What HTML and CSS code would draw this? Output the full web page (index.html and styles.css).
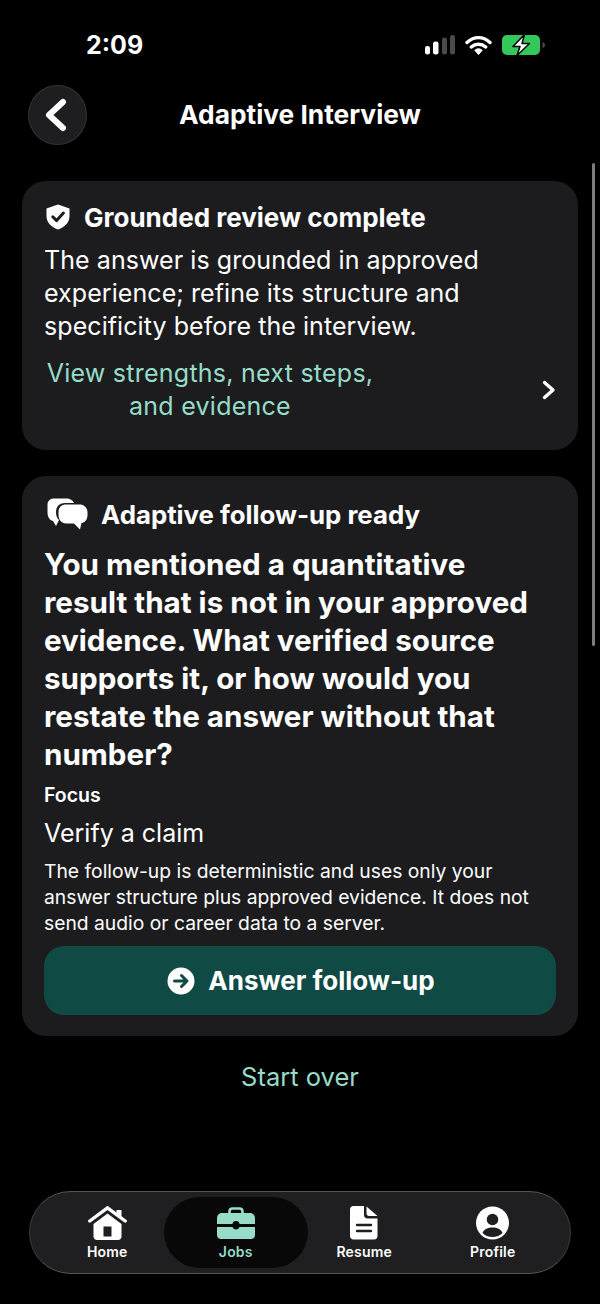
FILE: index.html
```html
<!DOCTYPE html>
<html>
<head>
<meta name="viewport" content="width=device-width, initial-scale=1">
<link rel="stylesheet" href="styles.css">
</head>
<body>
<div class="page">
  <div class="status">
    <span class="time">2:09</span>
    <div class="status-icons">
      <svg width="30" height="20" viewBox="0 0 30 20">
        <rect x="0" y="11" width="5" height="8.500" rx="2.300" fill="#fff"/>
        <rect x="8" y="6.500" width="5.500" height="13" rx="2.300" fill="#fff"/>
        <rect x="17" y="2.500" width="5" height="17" rx="2.300" fill="#4a4a4a"/>
        <rect x="25" y="0" width="5" height="19.500" rx="2.300" fill="#4a4a4a"/>
      </svg>
      <svg width="27" height="21" viewBox="0 0 27 21">
        <path d="M2 7.500C9 1 18 1 25 7.500M6.300 12C10.500 8.300 16.500 8.300 20.700 12" fill="none" stroke="#fff" stroke-width="3.400" stroke-linecap="round"/>
        <path d="M9.800 15.300C12 13.300 15 13.300 17.200 15.300L13.500 19.500Z" fill="#fff" stroke="#fff" stroke-linejoin="round"/>
      </svg>
      <svg width="43" height="22" viewBox="0 0 43 22">
        <rect x="0" y="1" width="38" height="20" rx="5" fill="#34c759"/>
        <path d="M40.500 8c1.500.5 2.500 1.500 2.500 3s-1 2.500-2.500 3z" fill="#4a4a4a"/>
        <path d="M22.500 .5L11 12.500h7L15 21.500 27.500 9.500h-7.500z" fill="#fff" stroke="#000" stroke-width="1.500" stroke-linejoin="round"/>
      </svg>
    </div>
  </div>

  <div class="topbar">
    <button class="back">
      <svg width="26" height="34" viewBox="0 0 26 34"><path d="M20 4L6 17l14 13" fill="none" stroke="#fff" stroke-width="6" stroke-linecap="round" stroke-linejoin="round"/></svg>
    </button>
    <h1 class="title">Adaptive Interview</h1>
  </div>

  <div class="scrollbar"></div>

  <div class="content">
    <div class="card card-review">
      <div class="card-head">
        <svg width="24" height="26" viewBox="0 0 24 26">
          <path d="M12 0.500L23.500 4.500V12C23.500 18.500 19 23 12 25.500 5 23 .5 18.500 .5 12V4.500Z" fill="#fff"/>
          <path d="M6.800 12.800l3.800 3.800 6.800-7.600" fill="none" stroke="#1c1c1e" stroke-width="3" stroke-linecap="round" stroke-linejoin="round"/>
        </svg>
        <h2 class="head-text">Grounded review complete</h2>
      </div>
      <p class="summary">The answer is grounded in approved experience; refine its structure and specificity before the interview.</p>
      <div class="more">
        <span class="more-text">View strengths, next steps, and evidence</span>
        <svg width="14" height="20" viewBox="0 0 14 20"><path d="M2.500 2.500L11 10l-8.500 7.500" fill="none" stroke="#fff" stroke-width="3.400" stroke-linecap="round" stroke-linejoin="round"/></svg>
      </div>
    </div>

    <div class="card card-follow">
      <div class="card-head follow-head">
        <svg width="41" height="32" viewBox="0 0 41 32">
          <path d="M7 0.500H19C23 0.500 26 2.500 27 5H18C12 5 9 9 9 14 9 18 10 20 12 22L9 28 6 23C2.500 22 0.500 19 0.500 14V7C0.500 3 3 .5 7 .5Z" fill="#fff"/>
          <path d="M19 6.500H32C37 6.500 40.500 9.500 40.500 14.500V17C40.500 21.500 38 24.500 34.500 25L33 31.500 27 25.500H19C14.500 25.500 11.500 22 11.500 16.500V14C11.500 9.500 14.500 6.500 19 6.500Z" fill="#fff"/>
        </svg>
        <h2 class="head-text head-follow">Adaptive follow-up ready</h2>
      </div>
      <p class="question">You mentioned a quantitative result that is not in your approved evidence. What verified source supports it, or how would you restate the answer without that number?</p>
      <div class="focus-label">Focus</div>
      <div class="focus-value">Verify a claim</div>
      <p class="note">The follow-up is deterministic and uses only your answer structure plus approved evidence. It does not send audio or career data to a server.</p>
      <button class="primary">
        <svg width="28" height="28" viewBox="0 0 28 28">
          <circle cx="14" cy="14" r="13.500" fill="#fff"/>
          <path d="M7.500 14h12M14.500 8.500l5.500 5.500-5.500 5.500" fill="none" stroke="#0f4a45" stroke-width="3" stroke-linecap="round" stroke-linejoin="round"/>
        </svg>
        <span>Answer follow-up</span>
      </button>
    </div>

    <div class="start-over">Start over</div>
  </div>

  <nav class="tabs">
    <div class="tab">
      <svg width="39" height="34" viewBox="0 0 39 34">
        <path d="M1.800 15L19.500 1.800 37.200 15" fill="none" stroke="#fff" stroke-width="3.400" stroke-linecap="round" stroke-linejoin="round"/>
        <path d="M28.500 4h5v9l-5-4z" fill="#fff"/>
        <path fill-rule="evenodd" d="M19.500 7.500L33.500 18V30.500c0 2-1.500 3.500-3.500 3.500H9c-2 0-3.500-1.500-3.500-3.500V18zM15.500 20.500V30.500h8V20.500z" fill="#fff"/>
      </svg>
      <span class="tab-label">Home</span>
    </div>
    <div class="tab tab-active">
      <svg width="38" height="34" viewBox="0 -1 38 34">
        <path d="M12.500 7V4.500C12.500 2.800 13.500 1.500 15.500 1.500h7c2 0 3 1.300 3 3V7" fill="none" stroke="#96dcc8" stroke-width="2.600"/>
        <path d="M5 6h28c2.500 0 5 2 5 5v6H22.500c0-2-1.500-3-3.500-3s-3.500 1-3.500 3H0v-6c0-3 2.500-5 5-5z" fill="#96dcc8"/>
        <path d="M0 20h15.500c.5 1.500 2 2.500 3.500 2.500s3-1 3.500-2.500H38v8c0 2.500-2 4-4 4H4c-2 0-4-1.500-4-4z" fill="#96dcc8"/>
      </svg>
      <span class="tab-label">Jobs</span>
    </div>
    <div class="tab">
      <svg width="28" height="34" viewBox="0 0 28 34">
        <path d="M3.500 0H14V9c0 2 1.500 3.500 3.500 3.500H27.500V30c0 2-1.500 3.500-3.500 3.500H3.500C1.500 33.500 0 32 0 30V3.500C0 1.500 1.500 0 3.500 0z" fill="#fff"/>
        <path d="M16.500 .5L27.500 10H19c-1.500 0-2.500-1-2.500-2.500z" fill="#fff"/>
        <path d="M7 19h14M7 25h14" fill="none" stroke="#1f1f21" stroke-width="2.400" stroke-linecap="round"/>
      </svg>
      <span class="tab-label">Resume</span>
    </div>
    <div class="tab">
      <svg width="33" height="34" viewBox="0 -.5 33 34">
        <circle cx="16.500" cy="16.500" r="16.500" fill="#fff"/>
        <circle cx="16.500" cy="13" r="5.800" fill="#1f1f21"/>
        <path d="M6.500 26.500C8 22.500 12 21 16.500 21s8.500 1.500 10 5.500C24 29 20.500 30.500 16.500 30.500S9 29 6.500 26.500z" fill="#1f1f21"/>
      </svg>
      <span class="tab-label">Profile</span>
    </div>
  </nav>
</div>
</body>
</html>
```

FILE: styles.css
```css
* {
  box-sizing: border-box;
}

html, body {
  margin: 0;
  padding: 0;
  background-color: #000;
}

body {
  color: #fff;
  font-family: Inter, "Liberation Sans", sans-serif;
}

.page {
  position: relative;
  display: flex;
  flex-direction: column;
  height: 1304px;
  overflow: hidden;
  padding-bottom: 30px;
}

h1, h2, p {
  margin: 0;
}

.status {
  display: flex;
  justify-content: space-between;
  align-items: center;
  height: 34px;
  margin-top: 28px;
  padding: 0 55px 0 86px;
}

.time {
  font-size: 25px;
  font-weight: 700;
}

.status-icons {
  display: flex;
  align-items: center;
  gap: 10px;
}

.topbar {
  position: relative;
  display: flex;
  align-items: center;
  justify-content: center;
  height: 60px;
  margin-top: 23px;
}

.back {
  position: absolute;
  left: 28px;
  top: 0;
  display: flex;
  align-items: center;
  justify-content: center;
  width: 59px;
  height: 60px;
  padding: 0 3px 0 0;
  border: 1px solid #333;
  border-radius: 50%;
  background-color: #1e1e20;
}

.title {
  margin-bottom: 2px;
  font-size: 26.3px;
  font-weight: 700;
}

.scrollbar {
  position: absolute;
  top: 163px;
  right: 5px;
  width: 3px;
  height: 483px;
  border-radius: 2px;
  background-color: #7c7c7c;
}

.content {
  display: flex;
  flex-direction: column;
  gap: 26px;
  margin-top: 36px;
  padding: 0 22px;
}

.card {
  border-radius: 24px;
  background-color: #1c1c1e;
  padding: 0 22px;
}

.card-review {
  height: 269px;
  padding-top: 21px;
}

.card-follow {
  height: 560px;
  padding-top: 21px;
}

.card-head {
  display: flex;
  align-items: center;
  gap: 14px;
  height: 30px;
  padding-left: 2px;
}

.follow-head {
  height: 34px;
  padding-left: 3px;
}

.head-text {
  font-size: 26px;
  font-weight: 700;
}

.head-follow {
  font-size: 25.8px;
  margin-left: -1px;
}

.summary {
  margin-top: 12px;
  font-size: 25px;
  letter-spacing: 0.07px;
  line-height: 33px;
}

.more {
  display: flex;
  align-items: center;
  justify-content: space-between;
  margin-top: 14px;
}

.more-text {
  width: 332px;
  font-size: 25px;
  letter-spacing: 0.25px;
  line-height: 33px;
  text-align: center;
  color: #96dcc8;
}

.question {
  margin-top: 14px;
  padding-right: 10px;
  font-size: 29.6px;
  font-weight: 700;
  line-height: 38px;
}

.focus-label {
  margin-top: 9px;
  font-size: 19.5px;
  font-weight: 600;
  line-height: 26px;
}

.focus-value {
  margin-top: 9px;
  font-size: 25px;
  line-height: 32px;
}

.note {
  margin-top: 9px;
  font-size: 19.3px;
  line-height: 26px;
}

.primary {
  display: flex;
  align-items: center;
  justify-content: center;
  gap: 13px;
  width: 100%;
  height: 69px;
  margin-top: 10px;
  padding: 0 0 0 2px;
  border: none;
  border-radius: 20px;
  background-color: #0f4a45;
  color: #fff;
  font-family: inherit;
  font-size: 26px;
  font-weight: 700;
}

.start-over {
  margin-top: -2px;
  text-align: center;
  font-size: 25.5px;
  line-height: 34px;
  color: #96dcc8;
}

.tabs {
  display: flex;
  margin: auto 29px 0;
  height: 83px;
  padding: 5px 13px;
  border: 1px solid #555557;
  border-left-color: #3a3a3c;
  border-right-color: #3a3a3c;
  border-radius: 42px;
  background-color: #1f1f21;
}

.tab {
  flex: 0 0 128.5px;
  display: flex;
  flex-direction: column;
  align-items: center;
  gap: 3px;
  padding-top: 9px;
  border-radius: 36px;
}

.tab-active {
  flex-basis: 144.5px;
  margin: 0 -8px;
  background-color: #080808;
}

.tab-label {
  font-size: 14px;
  font-weight: 600;
  letter-spacing: 0.2px;
}

.tab-active .tab-label {
  color: #96dcc8;
}
```
